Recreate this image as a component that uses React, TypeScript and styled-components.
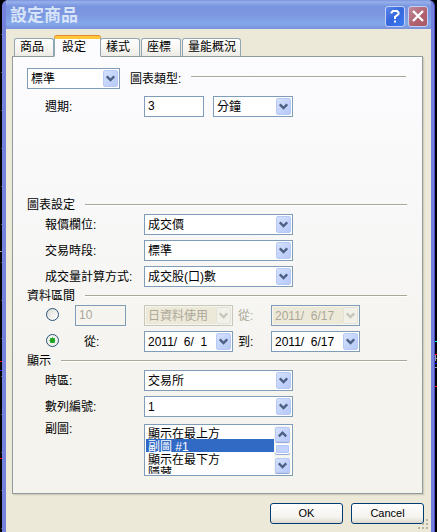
import React, { useRef } from "react";
import styled, { createGlobalStyle, css } from "styled-components";

const uiFont = `"Liberation Sans", "Noto Sans CJK TC", sans-serif`;

const GlobalStyle = createGlobalStyle`
  * { box-sizing: border-box; }
  body { margin: 0; background: #000; font: 12px/16px ${uiFont}; color: #000; }
  button, input, select { font: inherit; color: inherit; margin: 0; }
`;

const Desktop = styled.div`
  position: relative;
  display: flex;
  min-height: 100vh;
  padding: 0 3px 0 2px;
`;

const Marks = styled.svg<{ $side: "left" | "right" }>`
  position: absolute;
  top: 0;
  ${(p) => p.$side}: 0;
`;

const Dialog = styled.main`
  flex: 1;
  min-width: 0;
  display: flex;
  flex-direction: column;
  border: solid #7482de;
  border-width: 0 3px 0 4px;
  border-radius: 6px 6px 0 0;
  box-shadow: 1px 0 #4a4ec4;
  overflow: hidden;
  background: #ece9d8;
`;

const TitleBar = styled.header`
  display: flex;
  align-items: center;
  gap: 3px;
  height: 29px;
  padding: 3px 3px 0 4px;
  background: linear-gradient(#7b93dd 0, #97b0ec 2px, #7a95df 6px, #7c97e0 14px, #83a8ea 24px, #7b90dc 29px);
`;

const Title = styled.h1`
  flex: 1;
  margin: 0;
  font: bold 17px/24px ${uiFont};
  color: #d8e4f8;
`;

const CaptionButton = styled.button<{ $close?: boolean }>`
  display: grid;
  place-items: center;
  width: 20px;
  height: 21px;
  padding: 0;
  border: 1px solid #c3d0f4;
  border-radius: 3px;
  background: ${(p) =>
    p.$close
      ? "linear-gradient(135deg, #c08a9c, #b0606c 60%, #a85a68)"
      : "linear-gradient(135deg, #5a86ea, #3566dd 50%, #3b7cf4)"};
`;

const Body = styled.div`
  flex: 1;
  display: flex;
  flex-direction: column;
  padding: 7px 8px 7px 6px;
`;

const Tabs = styled.div`
  display: flex;
  align-items: flex-end;
  height: 21px;
  padding-left: 2px;
  margin-bottom: -1px;
`;

const Tab = styled.button<{ $active?: boolean }>`
  height: 19px;
  margin-right: 1px;
  padding: 0 9px 0 5px;
  line-height: 17px;
  border: 1px solid #91a7b4;
  border-bottom: 1px solid #919b9c;
  border-radius: 3px 3px 0 0;
  background: linear-gradient(#fff, #f6f5f0 60%, #ecebe6);
  white-space: nowrap;
  &:last-child {
    padding-right: 4px;
  }
  ${(p) =>
    p.$active &&
    css`
      height: 21px;
      margin: 0 -1px;
      padding: 0 14px 2px 7px;
      border-top: 3px solid #ffc73c;
      border-bottom-color: #fcfcfe;
      box-shadow: inset 0 1px #fff, 0 -1px #e68b2c;
      background: #fcfcfe;
      line-height: 14px;
      z-index: 1;
    `}
`;

const Panel = styled.section`
  display: flex;
  flex-direction: column;
  padding: 11px 15px 17px 14px;
  border: 1px solid #919b9c;
  box-shadow: 1px 1px #d0cebf, 2px 2px #e3e0d0;
  background: linear-gradient(#fcfcfe, #f9f9fa 25%, #f4f3ee 75%);
`;

const GroupTitle = styled.div<{ $top?: boolean }>`
  display: flex;
  align-items: center;
  gap: 10px;
  height: ${(p) => (p.$top ? 21 : 18)}px;
  &::after {
    content: "";
    flex: 1;
    height: 1px;
    margin: ${(p) => (p.$top ? "0 1px 4px 0" : "0 0 1px")};
    background: #aca899;
    box-shadow: 0 1px #fff;
  }
`;

const Rows = styled.div<{ $gap?: number; $after?: number }>`
  display: grid;
  gap: ${(p) => p.$gap ?? 5}px;
  margin-bottom: ${(p) => p.$after ?? 0}px;
`;

const Row = styled.div<{ $before?: number }>`
  display: grid;
  grid-template-columns: 99px minmax(0, 149px);
  padding-left: 18px;
  margin-top: ${(p) => p.$before ?? 0}px;
  align-items: center;
`;

const PeriodFields = styled.div`
  display: grid;
  grid-template-columns: 60px 80px;
  gap: 9px;
`;

const RangeRow = styled.div`
  display: grid;
  grid-template-columns: 30px 51px 18px 89px 5px 33px 89px;
  padding-left: 18px;
  align-items: center;
  & > :nth-child(3) { grid-column: 4; }
  & > :nth-child(4) { grid-column: 6; }
`;

const FieldLabel = styled.label<{ $muted?: boolean; $indent?: boolean }>`
  color: ${(p) => (p.$muted ? "#aca899" : "#000")};
  padding-left: ${(p) => (p.$indent ? 9 : 0)}px;
`;

const TopLabel = styled.label`
  align-self: start;
  margin-top: -3px;
`;

const TextBox = styled.input`
  width: 100%;
  min-width: 0;
  height: 21px;
  padding: 0 3px 1px;
  border: 1px solid #7f9db9;
  background: #fff;
  &:disabled { color: #aca899; border-color: #7f9db9; background: #f5f4ee; }
`;

const Combo = styled.div<{ $width?: number; $muted?: boolean; $greyEdge?: boolean }>`
  display: flex;
  width: ${(p) => (p.$width ? p.$width + "px" : "100%")};
  height: 21px;
  padding: 1px;
  border: 1px solid ${(p) => (p.$greyEdge ? "#c9c7ba" : "#7f9db9")};
  background: ${(p) => (p.$muted ? "#f5f4ee" : "#fff")};
`;

const comboText = css`
  flex: 1;
  min-width: 0;
  height: 17px;
  padding: 0 2px;
  border: 0;
  border-radius: 0;
  outline: 0;
  background: transparent;
  &:disabled { color: #aca899; background: #ece9d8; opacity: 1; }
`;

const ComboSelect = styled.select`
  ${comboText}
  appearance: none;
`;

const ComboInput = styled.input`
  ${comboText}
`;

const arrowFace = css<{ $muted?: boolean }>`
  display: grid;
  place-items: center;
  flex: none;
  width: 15px;
  height: 17px;
  padding: 0;
  border: 1px solid ${(p) => (p.$muted ? "#e4e2d8" : "#b9c9f5")};
  border-radius: 2px;
  background: ${(p) => (p.$muted ? "#f1f0e9" : "linear-gradient(135deg, #d4e0fe, #b6c9f8)")};
  color: ${(p) => (p.$muted ? "#c9c7ba" : "#4d6185")};
`;

const ArrowFace = styled.span`
  ${arrowFace}
  pointer-events: none;
`;

const ArrowButton = styled.button<{ $muted?: boolean }>`
  ${arrowFace}
`;

const Radio = styled.input`
  appearance: none;
  width: 13px;
  height: 13px;
  margin: 0 0 2px 1px;
  border: 1px solid #2b5279;
  border-radius: 50%;
  background: linear-gradient(135deg, #dcdcd5, #fff);
  &:checked {
    background: radial-gradient(circle, #21a121 0 2px, #5cc95c 3px, #f1f1ec 3px);
  }
`;

const ListFrame = styled.div`
  display: flex;
  height: 52px;
  padding: 1px;
  border: 1px solid #7f9db9;
  background: #fff;
`;

const List = styled.select`
  flex: 1;
  min-width: 0;
  height: 48px;
  padding: 0;
  border: 0;
  border-radius: 0;
  outline: 0;
  overflow-y: scroll;
  scrollbar-width: none;
  background: #fff;
  option {
    display: flex;
    align-items: center;
    height: 13px;
    min-height: 13px;
    padding: 0 2px;
    color: #000;
  }
  option:checked {
    color: #fff;
    background: #316ac5 linear-gradient(#316ac5, #316ac5);
  }
`;

const ScrollBar = styled.div`
  display: flex;
  flex-direction: column;
  justify-content: space-between;
  width: 17px;
  padding: 1px;
  background: #f5f5f0;
`;

const ScrollButton = styled(ArrowButton)`
  height: 15px;
  box-shadow: 0 1px #94a9d8;
`;

const ScrollThumb = styled.div`
  width: 15px;
  height: 10px;
  margin-bottom: 3px;
  border: 1px solid #fff;
  border-radius: 2px;
  background: #c3d3fd;
  box-shadow: inset 0 0 0 1px #b3c5f4, 0 1px #94a9d8;
`;

const Footer = styled.footer`
  position: relative;
  display: flex;
  justify-content: flex-end;
  gap: 8px;
  margin-top: 9px;
  margin-right: -1px;
`;

const PushButton = styled.button`
  width: 73px;
  height: 21px;
  padding: 0;
  border: 1px solid #003c74;
  border-radius: 3px;
  background: linear-gradient(#fff, #f4f3ee 70%, #dcd8ce);
  font-size: 11px;
  line-height: 17px;
`;

const Grip = styled.svg`
  position: absolute;
  right: -6px;
  bottom: -7px;
`;

const Chevron = ({ up }: { up?: boolean }) => (
  <svg width="9" height="7" viewBox="0 0 9 7" fill="none" stroke="currentColor" strokeWidth="2.4">
    <path d={up ? "M.8 5.4 4.5 1.7 8.2 5.4" : "M.8 1.3 4.5 5 8.2 1.3"} />
  </svg>
);

function ComboBox(props: { id: string; value: string; width?: number; label?: string; disabled?: boolean }) {
  return (
    <Combo $width={props.width} $muted={props.disabled} $greyEdge={props.disabled}>
      <ComboSelect id={props.id} aria-label={props.label} disabled={props.disabled} defaultValue={props.value}>
        <option>{props.value}</option>
      </ComboSelect>
      <ArrowFace aria-hidden $muted={props.disabled}>
        <Chevron />
      </ArrowFace>
    </Combo>
  );
}

function DateBox(props: { id: string; value: string; disabled?: boolean }) {
  return (
    <Combo $muted={props.disabled}>
      <ComboInput id={props.id} disabled={props.disabled} defaultValue={props.value} />
      <ArrowButton type="button" aria-label="選擇日期" disabled={props.disabled} $muted={props.disabled}>
        <Chevron />
      </ArrowButton>
    </Combo>
  );
}

export default function App() {
  const list = useRef<HTMLSelectElement>(null);
  const scroll = (amount: number) => list.current?.scrollBy(0, amount);

  return (
    <Desktop>
      <GlobalStyle />
      <Dialog>
        <TitleBar>
          <Title>設定商品</Title>
          <CaptionButton type="button" aria-label="說明">
            <svg width="12" height="14" viewBox="0 0 12 14" fill="none" stroke="#fff" strokeWidth="2">
              <path d="M2.5 4.5V3.5L4 2H8L9.5 3.5V5L6 8V10M6 11.5V13.5" />
            </svg>
          </CaptionButton>
          <CaptionButton type="button" aria-label="關閉" $close>
            <svg width="12" height="12" viewBox="0 0 12 12" stroke="#fff" strokeWidth="2.4">
              <path d="M1 1 11 11M11 1 1 11" />
            </svg>
          </CaptionButton>
        </TitleBar>
        <Body>
          <Tabs role="tablist">
            <Tab role="tab">商品</Tab>
            <Tab role="tab" aria-selected $active>設定</Tab>
            <Tab role="tab">樣式</Tab>
            <Tab role="tab">座標</Tab>
            <Tab role="tab">量能概況</Tab>
          </Tabs>
          <Panel>
            <Rows $gap={7} $after={79}>
              <GroupTitle $top>
                <ComboBox id="mode" value="標準" width={93} label="模式" />
                <span>圖表類型:</span>
              </GroupTitle>
              <Row>
                <FieldLabel htmlFor="period">週期:</FieldLabel>
                <PeriodFields>
                  <TextBox id="period" defaultValue="3" />
                  <ComboBox id="unit" value="分鐘" label="單位" />
                </PeriodFields>
              </Row>
            </Rows>
            <GroupTitle>圖表設定</GroupTitle>
            <Rows>
              <Row>
                <FieldLabel htmlFor="field">報價欄位:</FieldLabel>
                <ComboBox id="field" value="成交價" />
              </Row>
              <Row>
                <FieldLabel htmlFor="session">交易時段:</FieldLabel>
                <ComboBox id="session" value="標準" />
              </Row>
              <Row>
                <FieldLabel htmlFor="volume">成交量計算方式:</FieldLabel>
                <ComboBox id="volume" value="成交股(口)數" />
              </Row>
            </Rows>
            <GroupTitle>資料區間</GroupTitle>
            <Rows>
              <RangeRow>
                <Radio type="radio" name="range" aria-label="筆數" />
                <TextBox defaultValue="10" aria-label="數量" disabled />
                <ComboBox id="basis" value="日資料使用" label="資料單位" disabled />
                <FieldLabel htmlFor="back" $muted>從:</FieldLabel>
                <DateBox id="back" value="2011/  6/17" disabled />
              </RangeRow>
              <RangeRow>
                <Radio type="radio" name="range" aria-label="日期區間" defaultChecked />
                <FieldLabel htmlFor="from" $indent>從:</FieldLabel>
                <DateBox id="from" value="2011/  6/  1" />
                <FieldLabel htmlFor="to">到:</FieldLabel>
                <DateBox id="to" value="2011/  6/17" />
              </RangeRow>
            </Rows>
            <GroupTitle>顯示</GroupTitle>
            <Rows>
              <Row>
                <FieldLabel htmlFor="zone">時區:</FieldLabel>
                <ComboBox id="zone" value="交易所" />
              </Row>
              <Row>
                <FieldLabel htmlFor="series">數列編號:</FieldLabel>
                <ComboBox id="series" value="1" />
              </Row>
              <Row $before={2}>
                <TopLabel htmlFor="subchart">副圖:</TopLabel>
                <ListFrame>
                  <List id="subchart" ref={list} size={4} defaultValue="副圖 #1">
                    <option>顯示在最上方</option>
                    <option>副圖 #1</option>
                    <option>顯示在最下方</option>
                    <option>隱藏</option>
                  </List>
                  <ScrollBar>
                    <ScrollButton type="button" aria-label="向上" onClick={() => scroll(-13)}>
                      <Chevron up />
                    </ScrollButton>
                    <ScrollThumb />
                    <ScrollButton type="button" aria-label="向下" onClick={() => scroll(13)}>
                      <Chevron />
                    </ScrollButton>
                  </ScrollBar>
                </ListFrame>
              </Row>
            </Rows>
          </Panel>
          <Footer>
            <PushButton type="button">OK</PushButton>
            <PushButton type="button">Cancel</PushButton>
            <Grip width="12" height="12" fill="#b8b4a2" aria-hidden>
              <path d="M8 0h2v2h-2zM4 4h2v2h-2zM8 4h2v2h-2zM0 8h2v2h-2zM4 8h2v2h-2zM8 8h2v2h-2z" />
            </Grip>
          </Footer>
        </Body>
      </Dialog>
      <Marks $side="left" width="2" height="532" aria-hidden>
        <path stroke="#555" strokeDasharray="1 37" d="M1.5 34V532" />
        <path fill="#f00" d="M0 361h2v1h-2zM0 458h2v1h-2z" />
        <path fill="#22f" d="M0 370h2v1h-2z" />
        <path fill="#999" d="M0 251h2v1h-2z" />
      </Marks>
      <Marks $side="right" width="2" height="532" aria-hidden>
        <path fill="#0ff" d="M0 341h2v1h-2z" />
        <path fill="#f00" d="M0 354h2v1h-2zM0 386h2v1h-2z" />
        <path fill="#00f" d="M0 363h2v1h-2z" />
        <path fill="#999" d="M0 355h1v6h-1zM1 358h1v1h-1zM0 367h2v1h-2z" />
      </Marks>
    </Desktop>
  );
}
